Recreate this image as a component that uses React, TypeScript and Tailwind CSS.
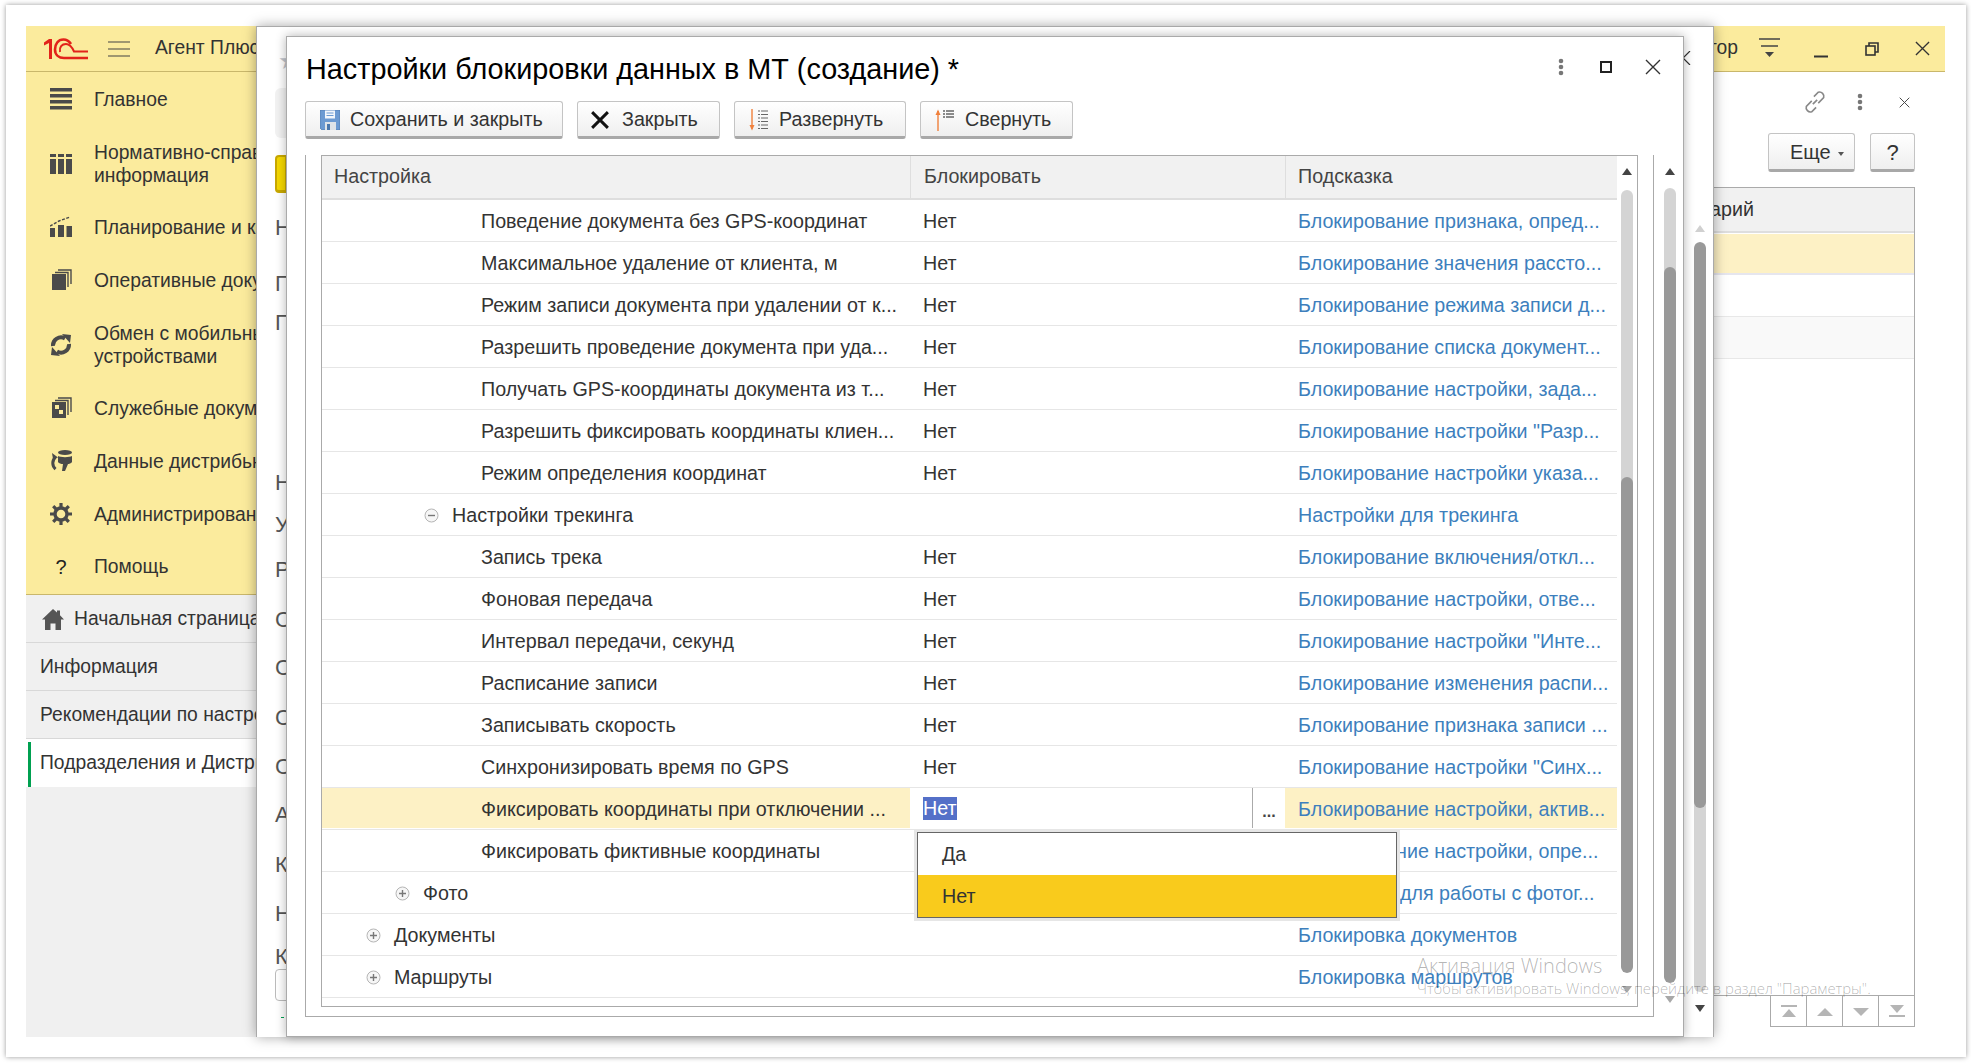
const sans = "font-['Liberation_Sans',Arial,sans-serif]";

const rows = [
  { level: 3, name: 'Поведение документа без GPS-координат', value: 'Нет', hint: 'Блокирование признака, опред...' },
  { level: 3, name: 'Максимальное удаление от клиента, м', value: 'Нет', hint: 'Блокирование значения рассто...' },
  { level: 3, name: 'Режим записи документа при удалении от к...', value: 'Нет', hint: 'Блокирование режима записи д...' },
  { level: 3, name: 'Разрешить проведение документа при уда...', value: 'Нет', hint: 'Блокирование списка документ...' },
  { level: 3, name: 'Получать GPS-координаты документа из т...', value: 'Нет', hint: 'Блокирование настройки, зада...' },
  { level: 3, name: 'Разрешить фиксировать координаты клиен...', value: 'Нет', hint: 'Блокирование настройки "Разр...' },
  { level: 3, name: 'Режим определения координат', value: 'Нет', hint: 'Блокирование настройки указа...' },
  { level: 2, tree: 'minus', name: 'Настройки трекинга', value: '', hint: 'Настройки для трекинга' },
  { level: 3, name: 'Запись трека', value: 'Нет', hint: 'Блокирование включения/откл...' },
  { level: 3, name: 'Фоновая передача', value: 'Нет', hint: 'Блокирование настройки, отве...' },
  { level: 3, name: 'Интервал передачи, секунд', value: 'Нет', hint: 'Блокирование настройки "Инте...' },
  { level: 3, name: 'Расписание записи', value: 'Нет', hint: 'Блокирование изменения распи...' },
  { level: 3, name: 'Записывать скорость', value: 'Нет', hint: 'Блокирование признака записи ...' },
  { level: 3, name: 'Синхронизировать время по GPS', value: 'Нет', hint: 'Блокирование настройки "Синх...' },
  { level: 3, name: 'Фиксировать координаты при отключении ...', value: 'Нет', hint: 'Блокирование настройки, актив...', active: true },
  { level: 3, name: 'Фиксировать фиктивные координаты', value: 'Нет', hint: 'Блокирование настройки, опре...' },
  { level: 1, tree: 'plus', name: 'Фото', value: '', hint: 'Настройки для работы с фотог...' },
  { level: 0, tree: 'plus', name: 'Документы', value: '', hint: 'Блокировка документов' },
  { level: 0, tree: 'plus', name: 'Маршруты', value: '', hint: 'Блокировка маршрутов' },
];

const menu = [
  { label: ['Главное'], icon: 'main', h: 'h-[54px]' },
  { label: ['Нормативно-справочная', 'информация'], icon: 'grid', h: 'h-[76px]' },
  { label: ['Планирование и контроль'], icon: 'chart', h: 'h-[50px]' },
  { label: ['Оперативные документы'], icon: 'docs', h: 'h-[56px]' },
  { label: ['Обмен с мобильными', 'устройствами'], icon: 'sync', h: 'h-[74px]' },
  { label: ['Служебные документы'], icon: 'service', h: 'h-[52px]' },
  { label: ['Данные дистрибьюторов'], icon: 'data', h: 'h-[54px]' },
  { label: ['Администрирование'], icon: 'gear', h: 'h-[52px]' },
  { label: ['Помощь'], icon: 'help', h: 'h-[53px]' },
];

const letters = [
  { t: 'Н', h: 'h-[56px]' }, { t: 'П', h: 'h-[39px]' }, { t: 'Г', h: 'h-[160px]' }, { t: 'Н', h: 'h-[42px]' },
  { t: 'У', h: 'h-[45px]' }, { t: 'Р', h: 'h-[50px]' }, { t: 'С', h: 'h-[48px]' }, { t: 'С', h: 'h-[50px]' },
  { t: 'С', h: 'h-[49px]' }, { t: 'С', h: 'h-[48px]' }, { t: 'А', h: 'h-[50px]' }, { t: 'К', h: 'h-[49px]' },
  { t: 'Н', h: 'h-[43px]' }, { t: 'К', h: 'h-[24px]' },
];

const MenuIcon = ({ kind }: { kind: string }) => {
  if (kind === 'help') return <span className="w-[22px] text-center text-[20px] text-[#222]">?</span>;
  return (
    <svg width="22" height="22" viewBox="0 0 22 22" fill="#4a4a4a">
      {kind === 'main' && (
        <>
          <rect y="0" width="22" height="3.5" />
          <rect y="6" width="22" height="3.5" />
          <rect y="12" width="22" height="3.5" />
          <rect y="18" width="22" height="3.5" />
        </>
      )}
      {kind === 'grid' && (
        <>
          <rect y="1" width="6" height="3" />
          <rect x="8" y="1" width="6" height="3" />
          <rect x="16" y="1" width="6" height="3" />
          <rect y="6" width="6" height="15" />
          <rect x="8" y="6" width="6" height="15" />
          <rect x="16" y="6" width="6" height="15" />
        </>
      )}
      {kind === 'chart' && (
        <>
          <rect y="12" width="5" height="9" />
          <rect x="8" y="9" width="6" height="12" />
          <rect x="16.5" y="10" width="5.5" height="11" />
          <path d="M0 10 L9 5 L20 1" fill="none" stroke="#4a4a4a" strokeWidth="1.5" strokeDasharray="3 1.5" />
        </>
      )}
      {kind === 'docs' && (
        <>
          <rect x="2" y="5" width="14" height="16" />
          <path d="M5 3.5 H18 V18 M8 1 H21 V15" fill="none" stroke="#4a4a4a" strokeWidth="1.4" />
        </>
      )}
      {kind === 'sync' && (
        <>
          <path d="M3 12 A8 8 0 0 1 15 4.5" fill="none" stroke="#4a4a4a" strokeWidth="4" />
          <path d="M19 10 A8 8 0 0 1 7 17.5" fill="none" stroke="#4a4a4a" strokeWidth="4" />
          <path d="M12 0 L21 1 L20 9 Z M10 22 L1 21 L2 13 Z" />
        </>
      )}
      {kind === 'service' && (
        <>
          <path fillRule="evenodd" d="M2 5 H16 V21 H2 Z M5 8 V12 H9 V8 Z M9 13 V17 H13 V13 Z" />
          <path d="M5 3.5 H18 V18 M8 1 H21 V15" fill="none" stroke="#4a4a4a" strokeWidth="1.4" />
        </>
      )}
      {kind === 'data' && (
        <>
          <ellipse cx="15" cy="2.5" rx="7" ry="2.5" />
          <path d="M8 6 C10 7.5 20 7.5 22 6 V12 C21 13.5 19 14 18 14 L15 21 H12 L13 14 C11 14 9 13.5 8 12 Z" />
          <path d="M5.5 7 A8 8 0 0 0 5.5 19" fill="none" stroke="#4a4a4a" strokeWidth="3" />
          <path d="M8 7.5 L2 3 L3 9 Z" />
        </>
      )}
      {kind === 'gear' && (
        <>
          <circle cx="11" cy="11" r="6" fill="none" stroke="#4a4a4a" strokeWidth="3.4" />
          <path d="M11 0 V4 M11 18 V22 M0 11 H4 M18 11 H22 M3.2 3.2 L6 6 M16 16 L18.8 18.8 M18.8 3.2 L16 6 M6 16 L3.2 18.8" stroke="#4a4a4a" strokeWidth="3.2" />
        </>
      )}
    </svg>
  );
};

const TreeIcon = ({ kind }: { kind: string }) => (
  <svg width="15" height="15" viewBox="0 0 15 15" className="shrink-0">
    <circle cx="7.5" cy="7.5" r="6.5" fill="#f6f6f6" stroke="#b5b5b5" />
    <path d={kind === 'plus' ? 'M4 7.5 H11 M7.5 4 V11' : 'M4 7.5 H11'} stroke="#777" strokeWidth="1.4" />
  </svg>
);

const Kebab = () => (
  <svg width="6" height="18" viewBox="0 0 6 18" fill="#777">
    <circle cx="3" cy="3" r="2.3" />
    <circle cx="3" cy="9" r="2.3" />
    <circle cx="3" cy="15" r="2.3" />
  </svg>
);

const Cross = ({ size, color = '#333', width = 1.4 }: { size: number; color?: string; width?: number }) => (
  <svg width={size} height={size} viewBox="0 0 16 16">
    <path d="M1 1 L15 15 M15 1 L1 15" stroke={color} strokeWidth={width} fill="none" />
  </svg>
);

const ToolButton = ({ w, icon, label }: { w: string; icon: React.ReactNode; label: string }) => (
  <button
    className={`${w} h-[38px] flex items-center gap-[9px] pl-[12px] pt-[1px] rounded-[3px] border border-[#c4c4c4] border-b-[3px] border-b-[#a8a8a8] bg-gradient-to-b from-white to-[#efefef] text-[19.7px] text-[#333] whitespace-nowrap`}
  >
    <span className="w-[23px] h-[24px] flex items-center justify-center shrink-0">{icon}</span>
    {label}
  </button>
);

const ScrollTrack = ({ bar, gap, light, thumb, upColor, downColor }: { bar: string; gap: string; light: string; thumb: string; upColor: string; downColor: string }) => (
  <div className={`${bar} flex flex-col items-center shrink-0`}>
    <span className={`mt-[12px] w-0 h-0 border-x-[5px] border-x-transparent border-b-[7px] ${upColor}`} />
    <div className={`${light} ${gap} w-[12px] rounded-[6px] bg-[#d4d4d4] flex flex-col justify-end overflow-hidden shrink-0`}>
      <div className={`${thumb} bg-[#999999] rounded-[6px]`} />
    </div>
    <span className={`mt-[13px] w-0 h-0 border-x-[5px] border-x-transparent border-t-[7px] ${downColor}`} />
  </div>
);

const App = () => {
  return (
    <div className={`${sans} relative w-[1971px] h-[1063px] bg-white overflow-hidden text-[19.7px] text-[#333]`}>
      {/* photo frame round the screen */}
      <div className="ml-[6px] mt-[5px] w-[1960px] h-[1052px] pl-[20px] pt-[21px] pr-[21px] pb-[20px] bg-white shadow-[0_0_5px_rgba(0,0,0,0.4)]">
        <div className="w-[1919px] h-[1011px] flex flex-col bg-white">
          {/* top bar */}
          <div className="h-[46px] shrink-0 flex items-center justify-between bg-[#fbeb9d] border-b border-[#c9b76b] text-[19.3px]">
            <div className="flex items-center">
              <svg width="44" height="22" viewBox="0 0 44 22" className="ml-[18px]" fill="none" stroke="#e2231a">
                <path d="M0 4.5 L5 1 H8 V21 H5 V5 L0 7.5 Z" fill="#e2231a" strokeWidth="0" />
                <path d="M27 6 C25 3 22 1.5 19.5 1.5 C14 1.5 11 6 11 11.5 C11 17 15 20 20 20 H44" strokeWidth="2.6" />
                <path d="M16 14 C15 9 18 6 22 6 C26 6 28 9 30 13.5 H44" strokeWidth="2" />
              </svg>
              <svg width="22" height="16" viewBox="0 0 22 16" className="ml-[20px]" stroke="#444">
                <path d="M0 1 H22 M0 8 H22 M0 15 H22" strokeWidth="1.2" />
              </svg>
              <span className="ml-[25px] text-[#333] whitespace-nowrap">Агент Плюс</span>
            </div>
            <div className="flex items-center">
              <span className="text-[#333]">Администратор</span>
              <svg width="22" height="22" viewBox="0 0 22 22" className="ml-[21px]">
                <path d="M0 1 H21 M2 8 H19" stroke="#444" strokeWidth="1.3" />
                <path d="M6 14 H15 L10.5 19 Z" fill="#444" />
              </svg>
              <svg width="14" height="14" viewBox="0 0 14 14" className="ml-[33px] mt-[4px]">
                <path d="M0 12.5 H14" stroke="#333" strokeWidth="2" />
              </svg>
              <svg width="14" height="14" viewBox="0 0 14 14" className="ml-[37px]" fill="none" stroke="#333" strokeWidth="1.6">
                <rect x="1" y="4" width="9" height="9" />
                <path d="M4 4 V1 H13 V10 H10" />
              </svg>
              <span className="ml-[36px] mr-[15px]">
                <Cross size={15} />
              </span>
            </div>
          </div>

          <div className="flex-1 flex min-h-0">
            {/* sidebar */}
            <div className="w-[230px] shrink-0 flex flex-col bg-[#f0f0f0] text-[19.3px]">
              <div className="h-[523px] bg-[#fbeb9d] border-b border-[#c9b76b]">
                {menu.map((m) => (
                  <div key={m.label[0]} className={`${m.h} flex items-center whitespace-nowrap`}>
                    <div className="w-[68px] pl-[24px] flex shrink-0">
                      <MenuIcon kind={m.icon} />
                    </div>
                    <div className="leading-[23px] text-[#333]">
                      {m.label.map((l) => (
                        <div key={l}>{l}</div>
                      ))}
                    </div>
                  </div>
                ))}
              </div>
              <div className="h-[48px] flex items-center pl-[16px] gap-[10px] pt-[1px] border-b border-[#d8d8d8] whitespace-nowrap overflow-hidden">
                <svg width="22" height="21" viewBox="0 0 22 21" fill="#555" className="shrink-0">
                  <path d="M11 0 L15 3.6 V1.5 H18 V6.3 L22 10.5 H19 V21 H13.5 V14.5 H8.5 V21 H3 V10.5 H0 Z" />
                </svg>
                <span>Начальная страница</span>
              </div>
              <div className="h-[48px] flex items-center pl-[14px] pt-[1px] border-b border-[#d8d8d8] whitespace-nowrap">Информация</div>
              <div className="h-[48px] flex items-center pl-[14px] pt-[1px] border-b border-[#d8d8d8] whitespace-nowrap overflow-hidden">Рекомендации по настройке</div>
              <div className="h-[48px] flex bg-white whitespace-nowrap overflow-hidden">
                <span className="ml-[2px] mt-[3px] w-[3px] bg-[#00a050] shrink-0" />
                <span className="pl-[9px] pt-[1px] flex items-center">Подразделения и Дистрибьюторы</span>
              </div>
            </div>

            {/* page under the windows */}
            <div className="flex-1 flex flex-col items-end pr-[30px] pb-[10px] min-w-0">
              <div className="h-[60px] flex items-center shrink-0">
                <svg width="26" height="26" viewBox="0 0 24 24" fill="none" stroke="#888" strokeWidth="1.5">
                  <path d="M10 14 L14 10" />
                  <path d="M9 11 L4 16 A4 4 0 0 0 9 21 L13 17" />
                  <path d="M15 13 L20 8 A4 4 0 0 0 15 3 L11 7" />
                </svg>
                <span className="ml-[29px]">
                  <Kebab />
                </span>
                <span className="ml-[36px] mr-[5px]">
                  <Cross size={11} color="#444" />
                </span>
              </div>
              <div className="flex gap-[15px] shrink-0 mt-[1px]">
                <button className="w-[87px] h-[39px] flex items-center pl-[21px] gap-[7px] pt-[1px] rounded-[3px] border border-[#c4c4c4] border-b-[3px] border-b-[#a8a8a8] bg-gradient-to-b from-white to-[#efefef] text-[20px] text-[#333]">
                  Еще
                  <span className="mt-[3px] w-0 h-0 border-x-[3.5px] border-x-transparent border-t-[4px] border-t-[#555]" />
                </button>
                <button className="w-[45px] h-[39px] pt-[1px] rounded-[3px] border border-[#c4c4c4] border-b-[3px] border-b-[#a8a8a8] bg-gradient-to-b from-white to-[#efefef] text-[22px] text-[#333]">?</button>
              </div>
              <div className="mt-[15px] w-full flex-1 min-h-0 flex flex-col border border-[#aaaaaa] border-b-0">
                <div className="h-[45px] shrink-0 flex items-center justify-end pr-[160px] pt-[1px] bg-[#f1f1f1] border-b-2 border-[#dedede] whitespace-nowrap">Комментарий</div>
                <div className="h-[41px] shrink-0 mt-px bg-[#fdf1c5] border-b-2 border-[#e6e6ee]" />
                <div className="h-[42px] shrink-0 border-b border-[#e8e8e8]" />
                <div className="h-[42px] shrink-0 border-b border-[#e8e8e8] bg-[#f9f9f9]" />
                <div className="flex-1" />
                <div className="flex justify-end border-t border-[#aaaaaa] h-[32px] shrink-0 -mr-px">
                  {['M5 3 H21 V5 H5 Z M6 15 L13 7 L20 15 Z', 'M5 14 L13 6 L21 14 Z', 'M5 6 L13 14 L21 6 Z', 'M6 3 L13 11 L20 3 Z M5 13 H21 V15 H5 Z'].map((d) => (
                    <div key={d} className="w-[37px] flex items-center justify-center border-l border-b border-r border-[#aaaaaa] -ml-px">
                      <svg width="26" height="18" viewBox="0 0 26 18" fill="#b5b5b5">
                        <path d={d} />
                      </svg>
                    </div>
                  ))}
                </div>
              </div>
            </div>
          </div>
        </div>
      </div>

      {/* window behind the dialog */}
      <div className="absolute left-[256px] top-[26px] w-[1458px] h-[1011px] flex justify-between bg-white border border-b-0 border-[#aaaaaa] shadow-[0_0_12px_rgba(0,0,0,0.35)] overflow-hidden">
        <div className="w-[30px] overflow-hidden shrink-0">
          <div className="pl-[18px] h-[189px] flex flex-col">
            <div className="h-[48px] mt-[14px] pt-[8px] pl-[3px] text-[24px] leading-[24px] text-[#c0c4cc]">★</div>
            <div className="h-[50px] -mt-[1px] rounded-l-[6px] bg-[#f2f2f2]" />
            <div className="h-[38px] mt-[17px] rounded-l-[4px] border-2 border-b-[3px] border-[#c8a800] bg-[#f5d800]" />
          </div>
          <div className="pl-[18px] whitespace-nowrap text-[22px] text-[#555]">
            {letters.map((l, i) => (
              <div key={i} className={`${l.h} leading-[24px]`}>
                {l.t}
              </div>
            ))}
            <div className="h-[32px] rounded-l-[4px] border border-[#bbbbbb]" />
            <div className="ml-[6px] mt-[16px] w-[3px] h-px bg-[#00a050]" />
          </div>
        </div>
        <div className="w-[29px] shrink-0 flex flex-col relative">
          <div className="mt-[24px] -ml-[2px]">
            <svg width="9" height="14" viewBox="0 0 9 14" fill="none" stroke="#333" strokeWidth="1.2">
              <path d="M8 0 L1 7 L8 14" />
            </svg>
          </div>
          <div className="absolute left-[10px] top-[198px] flex flex-col items-center">
            <span className="w-0 h-0 border-x-[5px] border-x-transparent border-b-[7px] border-b-[#d0d0d0]" />
            <div className="mt-[10px] w-[12px] h-[750px] rounded-[6px] bg-[#d4d4d4] overflow-hidden">
              <div className="h-[566px] rounded-[6px] bg-[#999999]" />
            </div>
            <span className="mt-[13px] w-0 h-0 border-x-[5px] border-x-transparent border-t-[7px] border-t-[#444444]" />
          </div>
        </div>
      </div>

      {/* dialog */}
      <div className="absolute left-[286px] top-[36px] w-[1398px] h-[1001px] flex flex-col bg-white border border-[#aaaaaa] shadow-[0_0_10px_rgba(0,0,0,0.3)]">
        <div className="h-[64px] shrink-0 flex items-center pl-[19px]">
          <span className="text-[28.8px] leading-[34px] text-black whitespace-nowrap">Настройки блокировки данных в МТ (создание) *</span>
          <div className="ml-auto flex items-center mb-[5px]">
            <Kebab />
            <span className="ml-[36px] w-[12px] h-[12px] border-2 border-[#222]" />
            <span className="ml-[33px] mr-[22px]">
              <Cross size={16} />
            </span>
          </div>
        </div>
        <div className="h-[54px] shrink-0 flex gap-[14px] pl-[18px]">
          <ToolButton
            w="w-[258px]"
            label="Сохранить и закрыть"
            icon={
              <svg width="20" height="20" viewBox="0 0 20 20">
                <path d="M0 0 H20 V20 H2 L0 18 Z" fill="#6c9ad2" stroke="#4a77ad" strokeWidth="0.7" />
                <rect x="5" y="0.5" width="10" height="8" fill="#f2f6fb" />
                <path d="M6.5 3 H13.5 M6.5 5.5 H13.5" stroke="#6c9ad2" />
                <rect x="5" y="12" width="11" height="8" fill="#dfe3e8" />
                <rect x="7" y="14" width="3" height="6" fill="#4a77ad" />
              </svg>
            }
          />
          <ToolButton
            w="w-[143px]"
            label="Закрыть"
            icon={
              <span className="-ml-[3px]">
                <Cross size={18} color="#111" width={2.6} />
              </span>
            }
          />
          <ToolButton
            w="w-[172px]"
            label="Развернуть"
            icon={
              <svg width="20" height="24" viewBox="0 0 20 24" fill="none">
                <path d="M3 1 V21" stroke="#f0803c" strokeWidth="1.4" />
                <path d="M0.5 17 L3 22.5 L5.5 17 Z" fill="#f0803c" />
                <path d="M9 3 H19 M9 6.5 H19 M9 10 H19 M9 13.5 H19 M9 17 H19 M9 20.5 H19" stroke="#666" strokeWidth="1.2" strokeDasharray="2 1 7 0" />
              </svg>
            }
          />
          <ToolButton
            w="w-[153px]"
            label="Свернуть"
            icon={
              <svg width="20" height="24" viewBox="0 0 20 24" fill="none">
                <path d="M3 23 V3" stroke="#f0803c" strokeWidth="1.4" />
                <path d="M0.5 7 L3 1.5 L5.5 7 Z" fill="#f0803c" />
                <path d="M8 3 H19 M8 6 H19 M8 9 H19" stroke="#666" strokeWidth="1.4" strokeDasharray="2 1 8 0" />
              </svg>
            }
          />
        </div>
        <div className="flex-1 min-h-0 flex">
          {/* group with the tree */}
          <div className="w-[1349px] ml-[18px] h-[862px] pl-[15px] pr-[15px] pb-[9px] border-l border-r border-b border-[#aaaaaa] shrink-0">
            <div className="h-full flex border border-[#aaaaaa]">
              <div className="w-[1295px] shrink-0 flex flex-col">
                <div className="h-[44px] shrink-0 flex bg-[#f1f1f1] border-b-2 border-[#dedede] text-[#444]">
                  <div className="w-[588px] flex items-center pl-[12px]">Настройка</div>
                  <div className="w-[375px] flex items-center pl-[13px] border-l border-[#dedede]">Блокировать</div>
                  <div className="flex-1 flex items-center pl-[12px] border-l border-[#dedede]">Подсказка</div>
                </div>
                {rows.map((r) => {
                  const pad = ['pl-[72px]', 'pl-[101px]', 'pl-[130px]', 'pl-[159px]'][r.level];
                  const iconGap = ['w-[44px]', 'w-[73px]', 'w-[102px]', 'w-[131px]'][r.level];
                  return (
                    <div key={r.name} className="h-[42px] shrink-0 flex border-b border-[#e6e6e6] whitespace-nowrap">
                      <div className={`w-[588px] mb-px pt-[3px] flex items-center ${r.tree ? '' : pad} ${r.active ? 'bg-[#fdf1c5]' : ''}`}>
                        {r.tree && (
                          <>
                            <div className={`${iconGap} shrink-0`} />
                            <TreeIcon kind={r.tree} />
                            <div className="w-[13px] shrink-0" />
                          </>
                        )}
                        {r.name}
                      </div>
                      <div className={`w-[375px] mb-px flex items-center pl-[13px] relative ${r.active ? '' : 'pt-[3px]'}`}>
                        {r.active ? (
                          <>
                            <span className="h-[23px] flex items-center pt-[2px] bg-[#5470c8] text-white">{r.value}</span>
                            <span className="absolute right-0 top-0 h-full w-[33px] border-l border-[#aaaaaa] flex items-end justify-center pb-[8px] text-[16px] font-bold text-[#444] leading-[16px]">...</span>
                          </>
                        ) : (
                          r.value
                        )}
                      </div>
                      <div className={`flex-1 mb-px pt-[3px] flex items-center pl-[13px] text-[#3d7fbd] ${r.active ? 'bg-[#fdf1c5]' : ''}`}>{r.hint}</div>
                    </div>
                  );
                })}
              </div>
              <ScrollTrack bar="w-[20px]" gap="mt-[15px]" light="h-[783px]" thumb="h-[496px]" upColor="border-b-[#444444]" downColor="border-t-[#a8a8a8]" />
            </div>
          </div>
          {/* dialog scrollbar */}
          <div className="ml-[10px] mt-px">
            <ScrollTrack bar="w-[12px]" gap="mt-[13px]" light="h-[795px]" thumb="h-[716px]" upColor="border-b-[#444444]" downColor="border-t-[#a8a8a8]" />
          </div>
        </div>
      </div>

      {/* drop-down of the edited cell */}
      <div className="absolute left-[914px] top-[829px] w-[486px] h-[92px] p-[3px] bg-[#e6e6e6]">
        <div className="h-full border border-[#666666] bg-white flex flex-col">
          <div className="flex-1 flex items-center pt-[2px] pl-[24px]">Да</div>
          <div className="flex-1 flex items-center pt-[2px] pl-[24px] bg-[#f9cb1c]">Нет</div>
        </div>
      </div>

      {/* windows activation watermark */}
      <div className="absolute left-[1417px] top-[950px] pointer-events-none font-['Open_Sans',sans-serif] font-light text-black/30 whitespace-nowrap">
        <div className="text-[20px] leading-[32px]">Активация Windows</div>
        <div className="text-[14.9px] leading-[20px] -mt-[4px]">Чтобы активировать Windows, перейдите в раздел "Параметры".</div>
      </div>
    </div>
  );
};

export default App;
